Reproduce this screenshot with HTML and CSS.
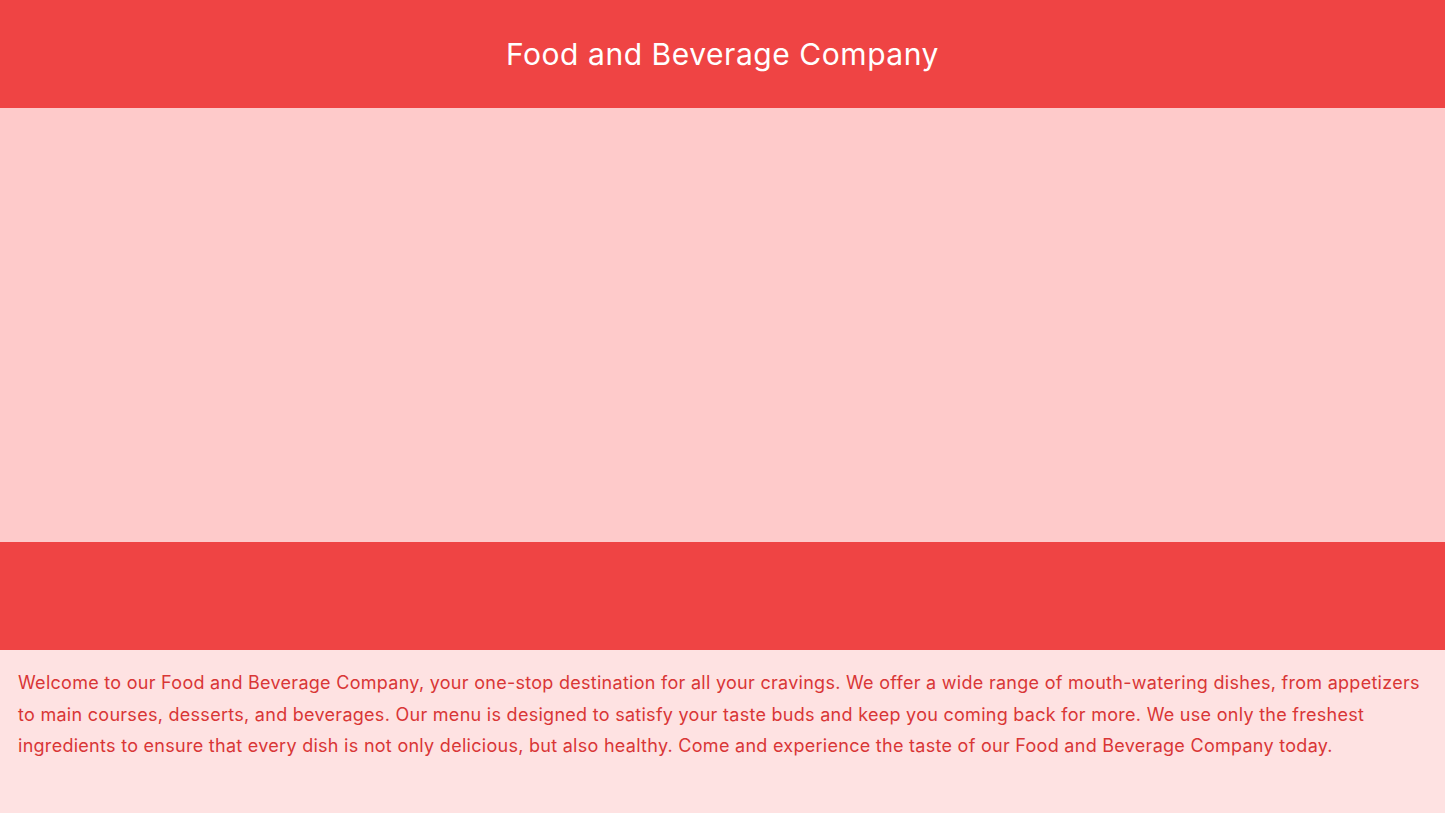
FILE: index.html
```html
<!DOCTYPE html>
<html lang="en">
<head>
<meta charset="utf-8">
<title>Food and Beverage Company</title>
<link rel="stylesheet" href="styles.css">
</head>
<body>
<header class="site-header">
  <h1 class="site-title">Food and Beverage Company</h1>
</header>
<div class="hero"></div>
<div class="band"></div>
<main class="content">
  <p class="intro">Welcome to our Food and Beverage Company, your one-stop destination for all your cravings. We offer a wide range of mouth-watering dishes, from appetizers to main courses, desserts, and beverages. Our menu is designed to satisfy your taste buds and keep you coming back for more. We use only the freshest ingredients to ensure that every dish is not only delicious, but also healthy. Come and experience the taste of our Food and Beverage Company today.</p>
</main>
</body>
</html>
```
FILE: styles.css
```css
html, body {
  margin: 0;
  padding: 0;
}
body {
  font-family: Inter, "Noto Sans", sans-serif;
  background: #fee2e2;
  min-height: 100vh;
}
.site-header {
  background: #ef4444;
  padding: 36px 16px;
  text-align: center;
}
.site-title {
  margin: 0;
  color: #ffffff;
  font-size: 30px;
  line-height: 36px;
  font-weight: 400;
  letter-spacing: 0.55px;
}
.hero {
  background: #fecaca;
  height: 434px;
}
.band {
  background: #ef4444;
  height: 108px;
}
.content {
  padding: 17px 18px 48px;
}
.intro {
  margin: 0;
  color: #d93636;
  font-size: 18px;
  line-height: 31.5px;
  letter-spacing: 0.28px;
}
```
